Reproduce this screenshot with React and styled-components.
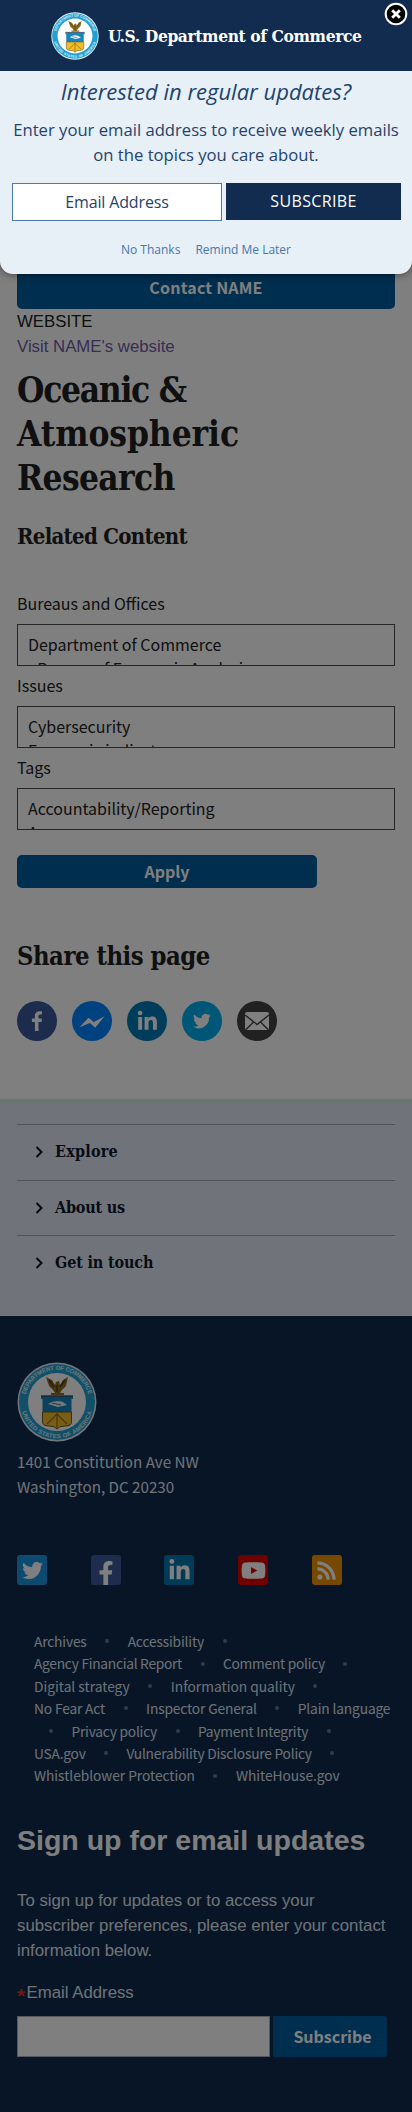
import React from 'react';
import styled, { createGlobalStyle } from 'styled-components';
import { FaFacebookF, FaLinkedinIn, FaTwitter, FaYoutube, FaRss } from 'react-icons/fa';

const sans = '"Liberation Sans", Arial, sans-serif';
const source = '"Noto Sans CJK SC", "Noto Sans", sans-serif';
const open = '"Open Sans", "Noto Sans", sans-serif';
const serif = '"DejaVu Serif Condensed", "DejaVu Serif", serif';

const GlobalStyle = createGlobalStyle`
  *, *::before, *::after { box-sizing: border-box; }
  body { margin: 0; background: #fff; color: #212121; font-family: ${sans}; }
  h1, h2, h3, p, ul { margin: 0; padding: 0; }
  button, input { font: inherit; border: 0; padding: 0; margin: 0; }
  a { text-decoration: none; color: inherit; }
`;

const Page = styled.div`
  position: relative;
  width: 412px;
  height: 2112px;
  overflow: hidden;
  display: flex;
  flex-direction: column;
`;

const Backdrop = styled.div`
  position: absolute;
  inset: 0;
  background: rgba(0, 0, 0, 0.5);
`;

const Modal = styled.section`
  position: absolute;
  top: 0;
  left: 0;
  width: 412px;
  height: 274px;
  border-radius: 0 0 13px 13px;
  background: #e7eff7;
  box-shadow: 0 0 8px rgba(0, 0, 0, 0.55);
  overflow: hidden;
  color: #1f436b;
  font-family: ${open};
  text-align: center;
`;

const ModalHeader = styled.header`
  height: 71px;
  padding-left: 51px;
  display: flex;
  align-items: center;
  gap: 9px;
  background: #112c4e;
`;

const Brand = styled.span`
  font: bold 17.3px/24px ${serif};
  letter-spacing: -0.4px;
  color: #fff;
  white-space: nowrap;
`;

const CloseButton = styled.button`
  position: absolute;
  top: 2px;
  right: 4px;
  width: 24px;
  height: 24px;
  background: none;
  svg { display: block; }
`;

const ModalTitle = styled.h2`
  margin-top: 6px;
  font-size: 22px;
  font-weight: 400;
  font-style: italic;
  line-height: 29px;
  white-space: nowrap;
`;

const ModalText = styled.p`
  margin-top: 11px;
  font-size: 16.65px;
  line-height: 25px;
  white-space: nowrap;
`;

const ModalForm = styled.div`
  margin: 16px 11px 0 12px;
  display: flex;
  gap: 4px;
`;

const ModalInput = styled.div`
  width: 210px;
  height: 38px;
  border: 1px solid #4a7aad;
  background: #fff;
  font-size: 16px;
  letter-spacing: -0.15px;
  line-height: 36px;
`;

const ModalSubmit = styled.button`
  flex: 1;
  height: 37px;
  background: #112c4e;
  color: #fff;
  font-size: 16px;
  letter-spacing: 0.35px;
  line-height: 37px;
`;

const ModalLinks = styled.nav`
  margin-top: 20px;
  display: flex;
  justify-content: center;
  gap: 15px;
  font-size: 12px;
  line-height: 18px;
  color: #4377ae;
`;

const Main = styled.main`
  height: 1098px;
  padding: 267px 17px 0;
`;

const ActionButton = styled.button`
  display: flex;
  justify-content: center;
  align-items: flex-start;
  width: ${(p) => p.$width}px;
  height: ${(p) => p.$height}px;
  border-radius: 5px;
  background: #005c9f;
  color: #fff;
  font: bold 16px/${(p) => p.$line}px ${source};
  letter-spacing: ${(p) => p.$spacing || 0}px;
`;

const Website = styled.div`
  font-size: 16.8px;
  line-height: 25px;
`;

const VisitLink = styled.a`
  display: block;
  color: #6f5ba8;
`;

const PageTitle = styled.h1`
  margin-top: 9px;
  font: bold 35px/44px ${serif};
`;

const TitleLine = styled.span`
  display: block;
  letter-spacing: ${(p) => p.$spacing}px;
`;

const Heading = styled.h2`
  margin-top: ${(p) => p.$top}px;
  font: bold ${(p) => p.$size}px/32px ${serif};
  letter-spacing: ${(p) => p.$spacing}px;
`;

const Filters = styled.div`
  margin-top: 32px;
  font-family: ${source};
`;

const FieldLabel = styled.div`
  height: 40px;
  padding-top: 6px;
  font-size: 16px;
  line-height: 26px;
`;

const ListBox = styled.div`
  height: 42px;
  padding: 8px 10px 0;
  border: 1px solid #4c4c4c;
  overflow: hidden;
  font-size: 16px;
  line-height: 23.5px;
`;

const Option = styled.div`
  white-space: pre;
`;

const ApplyRow = styled.div`
  padding-top: 25px;
`;

const ShareRow = styled.div`
  margin-top: 29px;
  display: flex;
  gap: 15px;
  svg { display: block; }
`;

const Band = styled.div`
  height: 6px;
  background: linear-gradient(#f4faf8, #d3ede1 40%, #d3ede1);
`;

const FooterNav = styled.nav`
  height: 212px;
  padding: 20px 17px 0;
  background: #e1e8f5;
  border-bottom: 1px solid #e6f0f0;
`;

const FooterNavItem = styled.a`
  display: flex;
  align-items: center;
  height: 55.5px;
  padding-left: 18px;
  gap: 11px;
  border-top: 1px solid #a0a6b2;
  color: #0c1829;
  font: bold 16px/24px ${serif};
  letter-spacing: ${(p) => p.$spacing}px;
`;

const Footer = styled.footer`
  flex: 1;
  padding: 46px 17px 0;
  background: #112a4c;
  color: #fff;
`;

const Address = styled.p`
  margin-top: 3px;
  font: 15.2px/25px ${source};
  color: #dfe7f0;
`;

const SocialRow = styled.div`
  margin-top: 56px;
  display: flex;
  gap: 43.7px;
`;

const SocialTile = styled.a`
  width: 30px;
  height: 30px;
  border-radius: 3px;
  background: ${(p) => p.$bg};
  display: flex;
  align-items: ${(p) => (p.$low ? 'flex-end' : 'center')};
  justify-content: center;
  overflow: hidden;
`;

const PolicyLinks = styled.div`
  margin: 45px 0 0 17px;
  font: 13.75px/22.4px ${source};
  color: #dbe4ee;
`;

const PolicyRow = styled.div`
  display: flex;
  align-items: center;
  gap: 18.5px;
  padding-left: ${(p) => p.$indent}px;
  letter-spacing: ${(p) => p.$spacing}px;
  white-space: nowrap;
`;

const Dot = styled.i`
  width: 4px;
  height: 4px;
  border-radius: 50%;
  background: #5e7b8e;
`;

const SignupTitle = styled.h2`
  margin-top: 35px;
  font-size: 28.5px;
  line-height: 36px;
  white-space: nowrap;
`;

const SignupText = styled.p`
  margin-top: 30px;
  font-size: 16.8px;
  line-height: 25px;
  white-space: nowrap;
  color: #dfe7f0;
`;

const EmailLabel = styled.div`
  margin-top: 17px;
  font-size: 16.8px;
  line-height: 25px;
  color: #dfe7f0;
  display: flex;
`;

const Star = styled.span`
  width: 9.5px;
  font-size: 21px;
  font-weight: bold;
  line-height: 32px;
  height: 25px;
  color: #d0342c;
`;

const SignupForm = styled.div`
  margin-top: 11px;
  display: flex;
  gap: 3px;
`;

const EmailInput = styled.input`
  width: 253px;
  height: 41px;
  background: #fff;
  border: 1px solid #aeb0b5;
`;

const SubscribeButton = styled.button`
  width: 114px;
  height: 41px;
  padding-left: 5px;
  border-radius: 0 3px 3px 0;
  background: #005c9f;
  color: #fff;
  font: bold 16px/40px ${source};
`;

function Seal({ size, id }) {
  return (
    <svg width={size} height={size} viewBox="0 0 80 80">
      <defs>
        <path id={`${id}-top`} d="M 7.8 40 A 32.2 32.2 0 0 1 72.2 40" />
        <path id={`${id}-bottom`} d="M 3.8 40 A 36.2 36.2 0 0 0 76.2 40" />
      </defs>
      <circle cx="40" cy="40" r="39.5" fill="#e8eff2" />
      <circle cx="40" cy="40" r="38" fill="#249fd2" />
      <circle cx="40" cy="40" r="29" fill="#fff" />
      <g fill="#d8f0fa" fontFamily="Liberation Sans, sans-serif" fontWeight="bold" fontSize="6">
        <text textAnchor="middle"><textPath href={`#${id}-top`} startOffset="50%" textLength="86">DEPARTMENT OF COMMERCE</textPath></text>
        <text textAnchor="middle"><textPath href={`#${id}-bottom`} startOffset="50%" textLength="94">UNITED STATES OF AMERICA</textPath></text>
      </g>
      <path d="M29 15 L35 18 L38 23 L39 20 L42 19 L43 23 L46 18 L51 15 L49 24 L45 28 L43 31 H47 V33 H34 V31 H38 L36 28 L32 24 Z" fill="#8d6b20" />
      <path d="M32 18 L37 25 M48 18 L43 25 M40 23 V30" stroke="#4d3b15" strokeWidth="1.3" />
      <path d="M24 34 H56 V37 H54.5 V50 H25.5 V37 H24Z" fill="#1684be" />
      <path d="M24 34 H56" stroke="#30434c" strokeWidth="1.3" />
      <path d="M31 42 Q38 37 46 40 L50 43 L41 45 Z" fill="#e8f2f3" />
      <path d="M35 41 L44 43" stroke="#4c6d79" strokeWidth="1" />
      <path d="M25.5 50 H54.5 V60 Q54.5 64 48 64 Q42 64 40 67 Q38 64 32 64 Q25.5 64 25.5 60 Z" fill="#efbd28" stroke="#6d5a28" strokeWidth="1" />
      <path d="M40 51 V66 M30 62 L40 52 L50 62" stroke="#936c1d" strokeWidth="1.2" fill="none" />
    </svg>
  );
}

function ShareIcon({ color, children }) {
  return (
    <svg width="40" height="40" viewBox="0 0 40 40">
      <circle cx="20" cy="20" r="20" fill={color} />
      {children}
    </svg>
  );
}

const filters = [
  { label: 'Bureaus and Offices', options: ['Department of Commerce', ' -Bureau of Economic Analysis'] },
  { label: 'Issues', options: ['Cybersecurity', 'Economic indicators'] },
  { label: 'Tags', options: ['Accountability/Reporting', 'Acronyms'] },
];

const footerSections = [
  { title: 'Explore', spacing: 0.2 },
  { title: 'About us', spacing: -0.2 },
  { title: 'Get in touch', spacing: -0.15 },
];

const DOT = 0;

const policyRows = [
  { spacing: -0.15, items: ['Archives', DOT, 'Accessibility', DOT] },
  { spacing: -0.27, items: ['Agency Financial Report', DOT, 'Comment policy', DOT] },
  { spacing: 0, items: ['Digital strategy', DOT, 'Information quality', DOT] },
  { spacing: -0.15, items: ['No Fear Act', DOT, 'Inspector General', DOT, 'Plain language'] },
  { spacing: -0.22, indent: 15, items: [DOT, 'Privacy policy', DOT, 'Payment Integrity', DOT] },
  { spacing: -0.22, items: ['USA.gov', DOT, 'Vulnerability Disclosure Policy', DOT] },
  { spacing: -0.04, items: ['Whistleblower Protection', DOT, 'WhiteHouse.gov'] },
];

export default function App() {
  return (
    <Page>
      <GlobalStyle />
      <Main>
        <ActionButton $width={378} $height={42} $line={40} $spacing={0.2}>Contact NAME</ActionButton>
        <Website>
          WEBSITE
          <VisitLink href="#">Visit NAME's website</VisitLink>
        </Website>
        <PageTitle>
          <TitleLine $spacing={-1.3}>Oceanic &amp;</TitleLine>
          <TitleLine $spacing={-0.1}>Atmospheric</TitleLine>
          <TitleLine $spacing={-0.65}>Research</TitleLine>
        </PageTitle>
        <Heading $top={20} $size={22} $spacing={-0.7}>Related Content</Heading>
        <Filters>
          {filters.map((f) => (
            <React.Fragment key={f.label}>
              <FieldLabel>{f.label}</FieldLabel>
              <ListBox>{f.options.map((o) => <Option key={o}>{o}</Option>)}</ListBox>
            </React.Fragment>
          ))}
          <ApplyRow><ActionButton $width={300} $height={33} $line={33}>Apply</ActionButton></ApplyRow>
        </Filters>
        <Heading $top={52} $size={25.4} $spacing={-0.5}>Share this page</Heading>
        <ShareRow>
          <ShareIcon color="#3b5998">
            <path fill="#fff" d="M21.5 30V21h3l.5-3.6h-3.5v-2.2c0-1 .4-1.7 1.9-1.7H25v-3.2c-.4 0-1.4-.1-2.6-.1-2.7 0-4.5 1.6-4.5 4.6v2.6h-3V21h3v9z" />
          </ShareIcon>
          <ShareIcon color="#0084ff">
            <path fill="#fff" d="M7.5 26.2 16.5 16.8 21.8 21 32.5 15.2 23.2 26.8 17.8 22Z" />
          </ShareIcon>
          <ShareIcon color="#007bb5">
            <path fill="#fff" d="M11.2 16h3.9v12.7h-3.9zM13.1 9.7a2.3 2.3 0 1 1 0 4.600 2.300 2.300 0 0 1 0-4.600M17.600 16h3.700v1.700c.7-1.200 2-2.100 3.900-2.100 3.900 0 4.700 2.600 4.700 6v7.100H26v-6.300c0-1.500 0-3.400-2.100-3.400s-2.400 1.600-2.400 3.300v6.400h-3.900z" />
          </ShareIcon>
          <ShareIcon color="#00aced">
            <path fill="#fff" d="M28.800 14.500a7 7 0 0 1-2.100.6 3.700 3.700 0 0 0 1.600-2c-.7.4-1.500.7-2.300.9a3.600 3.600 0 0 0-6.200 3.300 10.300 10.300 0 0 1-7.500-3.800 3.600 3.600 0 0 0 1.100 4.900 3.600 3.600 0 0 1-1.600-.5c0 1.800 1.200 3.300 2.900 3.700a3.600 3.600 0 0 1-1.600.1 3.600 3.600 0 0 0 3.400 2.500 7.300 7.300 0 0 1-5.400 1.500 10.300 10.300 0 0 0 15.900-9.200 7.400 7.400 0 0 0 1.800-2" />
          </ShareIcon>
          <ShareIcon color="#424242">
            <rect x="8" y="11" width="24" height="18" rx="2" fill="#fff" />
            <path d="M8 14 20 23.5l12-9.5M9 28.5l7.5-7.5M31 28.5l-7.5-7.5" stroke="#424242" strokeWidth="1.4" fill="none" />
          </ShareIcon>
        </ShareRow>
      </Main>
      <Band />
      <FooterNav>
        {footerSections.map((s) => (
          <FooterNavItem key={s.title} href="#" $spacing={s.spacing}>
            <svg width="9" height="12" viewBox="0 0 9 12"><path d="M1.5 1 6.5 6 1.5 11" fill="none" stroke="#0c1829" strokeWidth="2" /></svg>
            {s.title}
          </FooterNavItem>
        ))}
      </FooterNav>
      <Footer>
        <Seal size={80} id="footer-seal" />
        <Address>1401 Constitution Ave NW<br />Washington, DC 20230</Address>
        <SocialRow>
          <SocialTile $bg="#1b94e0"><FaTwitter size={21} /></SocialTile>
          <SocialTile $bg="#3d5a9c" $low><FaFacebookF size={24} /></SocialTile>
          <SocialTile $bg="#0077b0"><FaLinkedinIn size={23} /></SocialTile>
          <SocialTile $bg="#e00000"><FaYoutube size={25} /></SocialTile>
          <SocialTile $bg="#ee9200"><FaRss size={21} /></SocialTile>
        </SocialRow>
        <PolicyLinks>
          {policyRows.map((row, i) => (
            <PolicyRow key={i} $indent={row.indent || 0} $spacing={row.spacing}>
              {row.items.map((item, j) => (item === DOT ? <Dot key={j} /> : <a key={j} href="#">{item}</a>))}
            </PolicyRow>
          ))}
        </PolicyLinks>
        <SignupTitle>Sign up for email updates</SignupTitle>
        <SignupText>To sign up for updates or to access your<br />subscriber preferences, please enter your contact<br />information below.</SignupText>
        <EmailLabel><Star>*</Star>Email Address</EmailLabel>
        <SignupForm>
          <EmailInput aria-label="Email Address" />
          <SubscribeButton>Subscribe</SubscribeButton>
        </SignupForm>
      </Footer>
      <Backdrop />
      <Modal>
        <ModalHeader>
          <Seal size={48} id="header-seal" />
          <Brand>U.S. Department of Commerce</Brand>
        </ModalHeader>
        <ModalTitle>Interested in regular updates?</ModalTitle>
        <ModalText>Enter your email address to receive weekly emails<br />on the topics you care about.</ModalText>
        <ModalForm>
          <ModalInput>Email Address</ModalInput>
          <ModalSubmit>SUBSCRIBE</ModalSubmit>
        </ModalForm>
        <ModalLinks><a href="#">No Thanks</a><a href="#">Remind Me Later</a></ModalLinks>
        <CloseButton aria-label="Close">
          <svg width="24" height="24" viewBox="0 0 24 24">
            <circle cx="12" cy="12" r="10.3" fill="#000" stroke="#fff" strokeWidth="2" />
            <path d="m8.2 8.2 7.6 7.6m0-7.6-7.6 7.6" stroke="#fff" strokeWidth="2.8" />
          </svg>
        </CloseButton>
      </Modal>
    </Page>
  );
}
